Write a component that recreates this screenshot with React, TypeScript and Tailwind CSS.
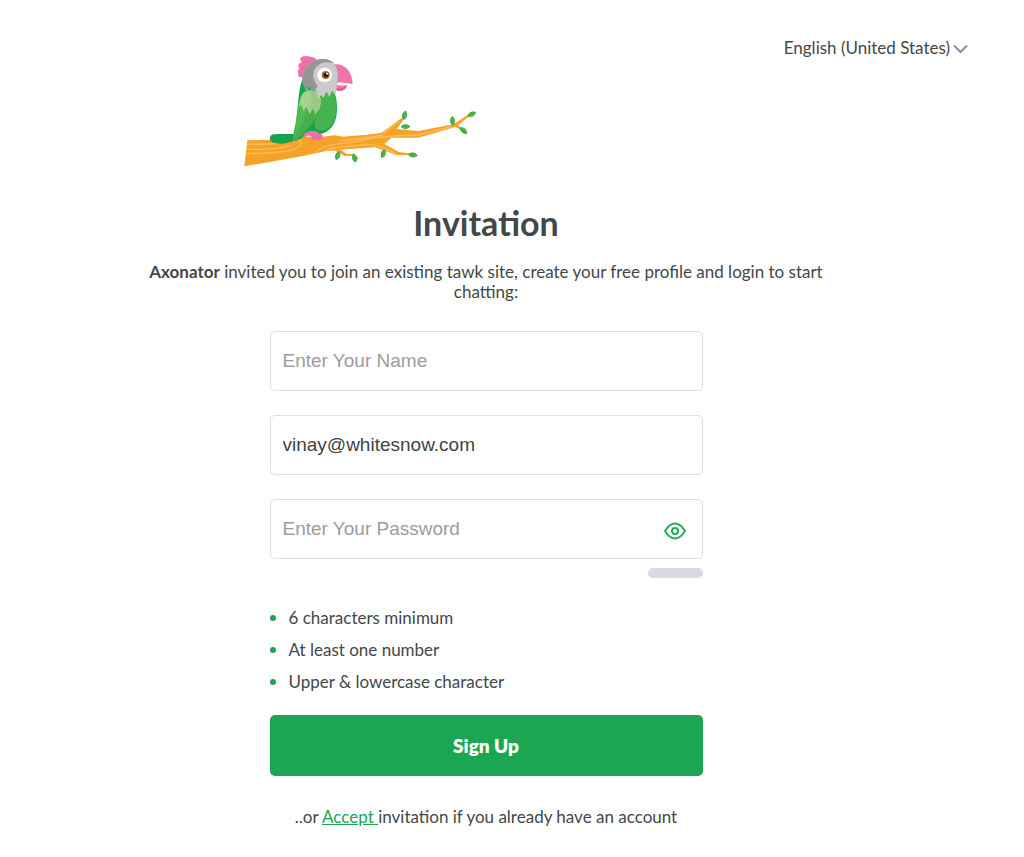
import { useState } from "react";

const PASSWORD_RULES = [
  "6 characters minimum",
  "At least one number",
  "Upper & lowercase character",
];

const FIELD =
  "h-[60px] w-full rounded-[5px] border border-[#dcdde8] bg-white px-3 font-['Liberation_Sans',sans-serif] text-[19px] text-[#3f4345] outline-none placeholder:text-[#9c9c9c] focus:border-[#1ca653]";

function Leaf({ x, y, angle }: { x: number; y: number; angle: number }) {
  return (
    <g transform={`translate(${x} ${y}) rotate(${angle})`}>
      <path d="M0 14C-10 6-10-6 0-15C10-6 10 6 0 14Z" fill="#4fb64d" />
      <path d="M0 14C-9 6-9-5 0-15Z" fill="#41ad4b" />
    </g>
  );
}

/** Parrot sitting on a branch. */
function ParrotLogo() {
  return (
    <svg
      width="232"
      height="112"
      viewBox="27 30 696 336"
      role="img"
      aria-label="Parrot on a branch"
    >
      {/* branch */}
      <path
        d="M37 286L110 284L200 273L250 277L300 271L325 275L345 273L390 270L440 263L500 219L510 215L507 222L485 252L550 258L655 238L703 207L708 210L669 240L687 255L684 258L661 246L550 278L470 278L448 297L492 321L530 326L530 331L485 330L420 307L345 312L270 319L200 334L28 364Z"
        fill="#f5a328"
      />
      <path d="M298 316L318 315L335 327L355 328L371 339L368 343L352 333L329 333Z" fill="#f5a328" />
      <g fill="none" stroke="#ffbd57" strokeWidth="4" strokeLinecap="round">
        <path d="M38 298C80 297 120 299 155 291" />
        <path d="M34 325C90 326 160 321 186 309C203 301 200 286 187 282" />
        <path d="M36 313C90 313 130 313 166 301" />
        <path d="M244 319C280 291 340 298 390 284C440 274 500 271 550 270L650 245" />
        <path d="M270 316C310 301 350 307 388 299C416 294 445 309 482 325" />
        <path d="M315 287C350 284 410 278 440 270L492 229" />
      </g>
      <Leaf x={509} y={211} angle={12} />
      <Leaf x={511} y={245} angle={88} />
      <Leaf x={653} y={228} angle={-5} />
      <Leaf x={710} y={208} angle={65} />
      <Leaf x={686} y={257} angle={-48} />
      <Leaf x={445} y={326} angle={18} />
      <Leaf x={533} y={330} angle={95} />
      <Leaf x={308} y={332} angle={18} />
      <Leaf x={359} y={339} angle={-15} />

      {/* tail and body */}
      <path
        d="M181 267C155 267 130 266 116 268C101 270 102 286 112 292C133 302 168 293 190 281Z"
        fill="#18a24e"
      />
      <path
        d="M201 104C188 144 190 196 181 241L170 289C196 288 213 269 224 258C238 267 251 270 265 265C291 254 306 230 306 191C306 163 302 145 291 131Z"
        fill="#18a552"
      />
      <path
        d="M260 150C253 189 238 222 239 242C241 258 263 263 279 250C300 235 305 208 303 177C302 155 299 145 288 134Z"
        fill="#48b34e"
      />
      <path
        d="M196 156C187 196 185 221 181 248L172 289C191 282 205 267 224 243C249 211 260 190 257 164C244 126 207 129 196 156Z"
        fill="#52b84f"
      />
      <path d="M225 136C224 191 200 246 172 289C195 282 236 232 251 203C264 169 252 140 225 136Z" fill="#45af4c" />
      <path
        d="M192 186L199 179L205 198L215 185L223 207L236 190L240 208L252 194C267 160 251 138 230 136C207 134 196 150 192 186Z"
        fill="#a7d28e"
      />
      <path d="M228 136C228 164 225 187 223 207L236 190L240 208L252 194C267 160 251 138 228 136Z" fill="#99cb86" />

      {/* crest */}
      <path
        d="M246 44C230 31 200 29 196 40C195 46 198 50 202 52C189 54 187 65 194 70C186 76 188 84 191 86C187 92 190 96 200 97L218 82Z"
        fill="#ee72a9"
      />
      <path d="M203 52L223 49M196 70L215 64M193 86L208 80" stroke="#e0639d" strokeWidth="2" fill="none" />

      {/* beak */}
      <path
        d="M296 58C331 55 352 80 353 118C335 112 323 115 315 119C324 123 331 120 336 119C336 134 318 141 299 135Z"
        fill="#ef74ac"
      />
      <path d="M306 114C317 111 328 113 337 118C326 123 315 122 306 119Z" fill="#fff" />
      <path d="M301 127C314 131 326 128 334 122C334 137 313 140 299 135Z" fill="#e75a9b" />

      {/* head */}
      <path
        d="M202 107C200 69 229 42 263 42C295 42 308 63 308 91C308 113 306 131 301 151L291 137L283 156L275 140L265 158L258 151L252 160L241 134L229 140L228 122L213 137Z"
        fill="#ccc9c9"
      />
      <path
        d="M202 107C200 69 229 42 263 42C280 42 290 48 297 55C262 45 237 61 235 88C234 107 243 116 248 123L241 134L229 140L228 122L213 137Z"
        fill="#959595"
      />
      <circle cx="269" cy="90" r="22" fill="#fff" />
      <circle cx="272" cy="90" r="12" fill="#9b6632" />
      <circle cx="273" cy="90" r="7" fill="#171310" />
      <circle cx="276" cy="86" r="3" fill="#fff" />

      {/* feet */}
      <path
        d="M205 278C204 264 218 256 233 258C246 256 249 263 253 267C264 264 267 278 260 284C253 288 245 285 240 284C233 287 228 281 229 275C220 267 213 274 205 278Z"
        fill="#ed72a9"
      />
      <path d="M232 272L240 282M244 270L250 282" stroke="#d85c96" strokeWidth="2" />
    </svg>
  );
}

function EyeIcon() {
  return (
    <svg width="22" height="18" viewBox="0 0 22 18" fill="none" stroke="#25ad5c" strokeWidth="2">
      <path d="M1 9C4 4 7 1.5 11 1.5S18 4 21 9C18 14 15 16.5 11 16.5S4 14 1 9Z" strokeLinejoin="round" />
      <circle cx="11" cy="9" r="3" />
    </svg>
  );
}

export default function App() {
  const [showPassword, setShowPassword] = useState(false);

  return (
    <div className="min-h-screen bg-white pr-[52px] pb-6 font-['Lato',sans-serif] text-[17px] leading-5 text-[#434748]">
      <header className="flex justify-end pt-9 pr-1">
        <div className="relative">
          <select
            aria-label="Language"
            className="block h-6 appearance-none bg-transparent pr-[18px] outline-none [field-sizing:content]"
          >
            <option>English (United States)</option>
          </select>
          <svg
            className="pointer-events-none absolute top-2 right-0"
            width="16"
            height="10"
            viewBox="0 0 16 10"
            fill="none"
            stroke="#8b8e90"
            strokeWidth="2"
          >
            <path d="M2 1.5L8.5 8L15 1.5" />
          </svg>
        </div>
      </header>

      <main className="mx-auto flex w-full max-w-[680px] flex-col items-center">
        <div className="-mt-[5px] flex w-full max-w-[484px]">
          <ParrotLogo />
        </div>

        <h1 className="mt-9 text-[34px] leading-10 font-bold">Invitation</h1>
        <p className="mt-[19px] text-center">
          <strong className="font-bold">Axonator</strong> invited you to join an existing tawk site,
          create your free profile and login to start chatting:
        </p>

        <form
          className="mt-[29px] flex w-full max-w-[433px] flex-col"
          onSubmit={(e) => e.preventDefault()}
        >
          <div className="flex flex-col gap-6">
            <input className={FIELD} type="text" aria-label="Name" placeholder="Enter Your Name" />
            <input className={FIELD} type="email" aria-label="Email" defaultValue="vinay@whitesnow.com" />
            <div className="relative">
              <input
                className={FIELD}
                type={showPassword ? "text" : "password"}
                aria-label="Password"
                placeholder="Enter Your Password"
              />
              <button
                type="button"
                aria-label="Show password"
                onClick={() => setShowPassword(!showPassword)}
                className="absolute inset-y-0 right-[17px] flex items-center pt-1"
              >
                <EyeIcon />
              </button>
            </div>
          </div>

          <div className="mt-[9px] h-[10px] w-[55px] self-end rounded-full bg-[#d7d9e4]" />

          <ul className="mt-[30px] flex flex-col gap-3">
            {PASSWORD_RULES.map((rule) => (
              <li key={rule} className="flex items-center gap-[13px]">
                <span className="size-[6px] rounded-full bg-[#1ca653]" />
                {rule}
              </li>
            ))}
          </ul>

          <button
            type="submit"
            className="mt-[23px] h-[61px] rounded-[5px] bg-[#1ca653] text-[19px] font-extrabold text-white"
          >
            Sign Up
          </button>
        </form>

        <p className="mt-[31px]">
          ..or{" "}
          <a href="#accept" className="text-[#1ca653] underline">
            Accept{" "}
          </a>
          invitation if you already have an account
        </p>
      </main>
    </div>
  );
}
